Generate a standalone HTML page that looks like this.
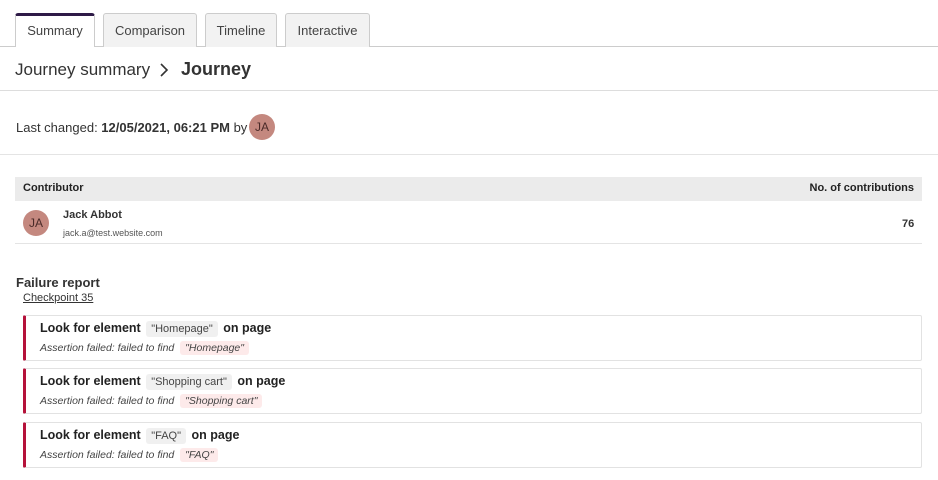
<!DOCTYPE html>
<html><head><style>
*{box-sizing:border-box;margin:0;padding:0}
body{width:938px;height:480px;background:#fff;font-family:"Liberation Sans",sans-serif;color:#333;position:relative;overflow:hidden}
.a{position:absolute}
.tab{position:absolute;top:13px;height:34px;border:1px solid #ccc;border-bottom:none;background:#f2f2f2;border-radius:3px 3px 0 0;font-size:13px;color:#444;text-align:center;line-height:34px}
.tab.on{background:#fff;border-top:3px solid #2e1a47;line-height:30px;height:34px;z-index:2}
.av{position:absolute;width:26px;height:26px;border-radius:50%;background:#c4887f;color:#4a2a28;font-size:12px;text-align:center;line-height:26px}
.box{position:absolute;left:23px;width:899px;height:46px;border:1px solid #e2e2e2;border-left:3px solid #b5123a;border-radius:2px}
.t{position:absolute;left:14px;top:5px;font-size:12.5px;color:#222;font-weight:bold}
.c{background:#f0f0f0;font-size:11px;padding:2px 5px;border-radius:3px;margin:0 2px;font-weight:normal;color:#444}
.s{position:absolute;left:14px;top:26px;font-size:10.5px;font-style:italic;color:#444}
.p{background:#fdeaea;padding:1px 5px;border-radius:3px;margin-left:3px}
</style></head><body>
<div class="a" style="left:0;top:46px;width:938px;height:1px;background:#ccc"></div>
<div class="tab on" style="left:15px;width:80px;">Summary</div>
<div class="tab" style="left:103px;width:94px;">Comparison</div>
<div class="tab" style="left:205px;width:72px;">Timeline</div>
<div class="tab" style="left:285px;width:85px;">Interactive</div>
<div class="a" style="left:15px;top:60px;font-size:17px;color:#333">Journey summary</div>
<svg class="a" style="left:159px;top:62px" width="10" height="16"><path d="M2 2 L8 8 L2 14" fill="none" stroke="#333" stroke-width="1.6"/></svg>
<div class="a" style="left:181px;top:59px;font-size:18px;color:#333;font-weight:bold">Journey</div>
<div class="a" style="left:0;top:90px;width:938px;height:1px;background:#ddd"></div>
<div class="a" style="left:16px;top:120px;font-size:13px">Last changed: <b>12/05/2021, 06:21 PM</b> by</div>
<div class="av" style="left:249px;top:114px">JA</div>
<div class="a" style="left:0;top:154px;width:938px;height:1px;background:#e4e4e4"></div>
<div class="a" style="left:15px;top:177px;width:907px;height:24px;background:#ebebeb;font-size:11px;font-weight:bold;color:#222;line-height:22px;padding:0 8px">Contributor<span style="float:right">No. of contributions</span></div>
<div class="a" style="left:15px;top:243px;width:907px;height:1px;background:#e4e4e4"></div>
<div class="av" style="left:23px;top:210px">JA</div>
<div class="a" style="left:63px;top:209px;font-size:11px;font-weight:bold">Jack Abbot</div>
<div class="a" style="left:63px;top:228px;font-size:9px;color:#555">jack.a@test.website.com</div>
<div class="a" style="left:902px;top:218px;font-size:11px;font-weight:bold">76</div>
<div class="a" style="left:16px;top:275px;font-size:13px;font-weight:bold">Failure report</div>
<div class="a" style="left:23px;top:292px;font-size:11px;text-decoration:underline">Checkpoint 35</div>
<div class="box" style="top:315px"><div class="t">Look for element <span class="c">"Homepage"</span> on page</div><div class="s">Assertion failed: failed to find <span class="p">"Homepage"</span></div></div>
<div class="box" style="top:368px"><div class="t">Look for element <span class="c">"Shopping cart"</span> on page</div><div class="s">Assertion failed: failed to find <span class="p">"Shopping cart"</span></div></div>
<div class="box" style="top:422px"><div class="t">Look for element <span class="c">"FAQ"</span> on page</div><div class="s">Assertion failed: failed to find <span class="p">"FAQ"</span></div></div>
</body></html>
